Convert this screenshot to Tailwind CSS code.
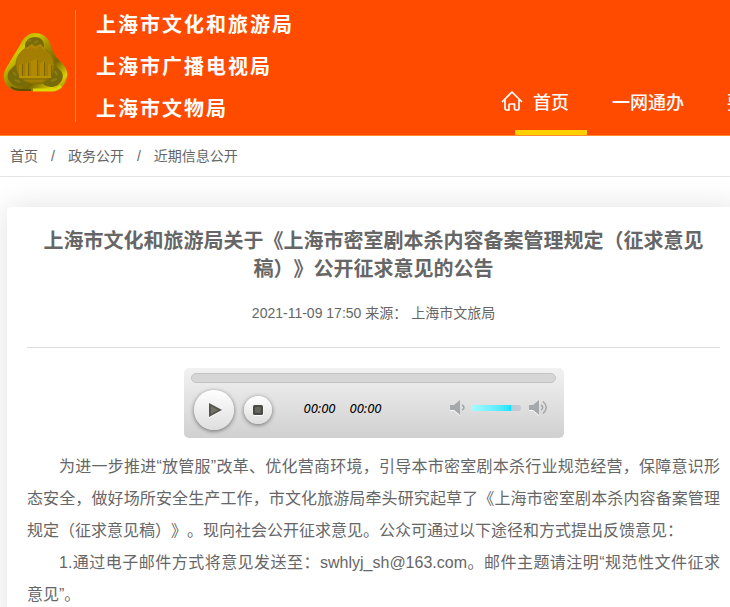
<!DOCTYPE html>
<html lang="zh-CN">
<head>
    <meta charset="UTF-8">
    <meta name="viewport" content="width=device-width, initial-scale=1.0">
    <title>上海市文化和旅游局</title>
    <script src="https://cdn.jsdelivr.net/npm/@tailwindcss/browser@4"></script>
</head>
<body class="bg-white text-[#666] overflow-x-hidden font-['Liberation_Sans','Noto_Sans_CJK_SC',sans-serif] [text-spacing-trim:space-all]">

    <!-- Header -->
    <header class="bg-[#ff4b00] border-b border-[#ff8a2b] text-white flex overflow-hidden">
        <div class="flex shrink-0 pb-[5px]">
            <!-- Emblem -->
            <svg class="w-[76px] h-[76px] mt-6 shrink-0" viewBox="0 0 76 76" aria-hidden="true">
                <defs>
                    <linearGradient id="gold" x1="0" y1="0" x2="1" y2="1">
                        <stop offset="0" stop-color="#8d7c00"/>
                        <stop offset=".28" stop-color="#d2c800"/>
                        <stop offset=".45" stop-color="#a39000"/>
                        <stop offset=".66" stop-color="#776500"/>
                        <stop offset=".85" stop-color="#dcd000"/>
                        <stop offset="1" stop-color="#806b00"/>
                    </linearGradient>
                    <linearGradient id="disc" x1="0" y1="0" x2="0" y2="1">
                        <stop offset="0" stop-color="#a57e04"/>
                        <stop offset="1" stop-color="#a08003"/>
                    </linearGradient>
                </defs>
                <path d="M35 9c6 0 11 3 14 8l4 10c2 5 5 8 9 12 5 6 7 11 4 17-2 7-7 11-14 11H19C11 67 5 62 4 55c-1-5 1-9 4-14l12-20c3-6 7-12 15-12z" fill="url(#gold)"/>
                <path d="M35 13c6 0 9 4 9 9v7H25v-7c0-5 4-9 10-9zM9 47l9-9 10 22c-7 4-14 3-18-2-3-3-3-7-1-11zM52 38l9 9c3 4 2 9-1 12-4 5-12 5-17 1z" fill="#776b0a"/>
                <path d="M28 17l3-1M34 19l4-2M13 48l3 3M15 56l5 2M55 47l2 4M51 57l6-2" stroke="#8d7e10" stroke-width="2"/>
                <path d="M11 63q4 3 9 3h11" fill="none" stroke="#5f5000" stroke-width="2"/>
                <path d="M33 66h19q5 0 9-4" fill="none" stroke="#dcd800" stroke-width="3"/>
                <circle cx="35" cy="41" r="19" fill="url(#disc)" stroke="#8b7206" stroke-width="1"/>
                <path d="M26 25l6-4 3 3 5-3 5 5" fill="none" stroke="#b18605" stroke-width="2"/>
                <path d="M19 41l3-2v13h-3zM25 40l3-2v14h-3zM31 37l6-2v17h-6zM40 39l4-2v15h-4zM48 41l3-2v13h-3z" fill="#b18a02"/>
                <path d="M22.500 40v12M28.500 39v13M37.500 36v16M44.500 38v14M51.500 41v10" stroke="#7d6300" stroke-width="1"/>
                <path d="M19 53h32" stroke="#b79400" stroke-width="2"/>
                <path d="M20 55h30M26 59h19" stroke="#846a00" stroke-width="1"/>
            </svg>
            <div class="-ml-px mt-2.5 w-px h-28 bg-[#ff8a3d]"></div>
            <h1 class="pl-5 pt-1 text-xl leading-[42px] font-bold tracking-widest">
                上海市文化和旅游局<br>上海市广播电视局<br>上海市文物局
            </h1>
        </div>
        <nav class="flex items-end gap-[7px] shrink-0 ml-[207px] text-lg font-medium whitespace-nowrap">
            <a href="#" class="relative flex items-center gap-2.5 h-[65px] pr-[18px]">
                <svg class="w-[22px] h-[22px] -mt-1" viewBox="0 0 22 22" fill="none" stroke="currentColor" stroke-width="1.7" stroke-linecap="round" stroke-linejoin="round" aria-hidden="true">
                    <path d="M1.500 11.500 11 2l9.500 9.500"/>
                    <path d="M4 10v8.500q0 1.500 1.500 1.500H8v-5q0-1 1-1h4.500v4.500q0 1.500 1.500 1.500h1.500q1.500 0 1.500-1.500V10"/>
                </svg>
                首页
                <span class="absolute left-[14px] right-0 bottom-0 h-[5px] bg-[#ffd000]"></span>
            </a>
            <a href="#" class="flex items-center h-[65px] px-[18px]">一网通办</a>
            <a href="#" class="flex items-center h-[65px] px-[18px]">要闻动态</a>
        </nav>
    </header>

    <!-- Breadcrumb -->
    <nav class="flex items-center h-[41px] pl-2.5 border-b border-[#e5e5e5] text-sm">
        <a href="#">首页</a>
        <span class="mx-[13px]">/</span>
        <a href="#">政务公开</a>
        <span class="mx-[13px]">/</span>
        <a href="#">近期信息公开</a>
    </nav>

    <!-- Article -->
    <main class="mt-[30px] ml-[7px] -mr-2.5 p-5 rounded-sm bg-white shadow-[0_0_30px_rgba(0,0,0,0.12)]">
        <h2 class="text-xl leading-7 font-bold text-center">上海市文化和旅游局关于《上海市密室剧本杀内容备案管理规定（征求意见稿）》公开征求意见的公告</h2>
        <p class="mt-5 pb-6 border-b border-[#ddd] text-sm leading-5 text-center">2021-11-09 17:50 来源： 上海市文旅局</p>

        <!-- Audio player -->
        <div class="w-[380px] h-[70px] mt-5 mx-auto pl-[7px] pr-2 pt-[5px] rounded-[5px] bg-linear-to-b from-[#f2f2f2] to-[#d0d0d0] text-black">
            <input type="range" value="0" aria-label="播放进度" class="block w-full h-2.5 appearance-none rounded-full bg-[#d6d6d6] border border-[#c4c4c4] [&::-webkit-slider-thumb]:appearance-none [&::-webkit-slider-thumb]:w-0">
            <div class="flex items-center mt-[7px] pl-[3px]">
                <button type="button" aria-label="播放" class="flex items-center justify-center w-10 h-10 rounded-full bg-linear-to-b from-white to-[#dedede] shadow-[0_1px_4px_rgba(0,0,0,0.5)]">
                    <svg class="w-5 h-5" viewBox="0 0 20 20" aria-hidden="true">
                        <path d="M5 5v13l13-7z" fill="#fff"/>
                        <path d="M5 3v14l13-7z" fill="#55554c"/>
                        <path d="M7 6v8l7-4z" fill="#737368"/>
                    </svg>
                </button>
                <button type="button" aria-label="停止" class="flex items-center justify-center w-7 h-7 ml-2.5 rounded-full bg-linear-to-b from-white to-[#dedede] shadow-[0_1px_4px_rgba(0,0,0,0.5)]">
                    <svg class="w-3 h-3" viewBox="0 0 12 12" aria-hidden="true">
                        <rect x="1.500" y="2" width="10" height="10" rx="1.500" fill="#fff"/>
                        <rect x="1" y="1" width="10" height="10" rx="1.500" fill="#4a4a45"/>
                        <rect x="3" y="3" width="6" height="6" rx="1" fill="#66665f"/>
                    </svg>
                </button>
                <div class="flex gap-3.5 ml-8 pb-1 text-[13px] leading-5 italic font-normal font-['Noto_Sans',sans-serif]">
                    <span>00:00</span>
                    <span>00:00</span>
                </div>
                <div class="flex items-center ml-auto pb-1 pr-[5px]">
                    <svg class="w-[18px] h-4" viewBox="0 0 18 16" fill="none" aria-hidden="true">
                        <path d="M1 6h4l6-5v15l-6-5H1z" fill="#fff"/>
                        <path d="M1 5h4l6-5v15l-6-5H1z" fill="#a5a9ac"/>
                        <path d="M13 5q4 2.500 0 5" stroke="#a5a9ac" stroke-width="1.600"/>
                    </svg>
                    <input type="range" value="80" aria-label="音量" class="block w-[50px] h-1.5 mx-1 appearance-none rounded-full bg-[#c6c8cd] bg-linear-to-r from-[#a5fbff] via-[#00e4ff] via-80% to-[#c6c8cd] to-84% [&::-webkit-slider-thumb]:appearance-none [&::-webkit-slider-thumb]:w-0">
                    <svg class="w-[22px] h-4 ml-1" viewBox="0 0 22 16" fill="none" aria-hidden="true">
                        <path d="M0 6h4l6-5v15l-6-5H0z" fill="#fff"/>
                        <path d="M0 5h4l6-5v15l-6-5H0z" fill="#a5a9ac"/>
                        <path d="M12 5q3.500 2.500 0 5M14 1.500q6.500 6 0 12" stroke="#a5a9ac" stroke-width="1.600"/>
                    </svg>
                </div>
            </div>
        </div>

        <div class="mt-[13px] text-base leading-8 text-justify indent-8">
            <p>为进一步推进“放管服”改革、优化营商环境，引导本市密室剧本杀行业规范经营，保障意识形态安全，做好场所安全生产工作，市文化旅游局牵头研究起草了《上海市密室剧本杀内容备案管理规定（征求意见稿）》。现向社会公开征求意见。公众可通过以下途径和方式提出反馈意见：</p>
            <p>1.通过电子邮件方式将意见发送至：swhlyj_sh@163.com。邮件主题请注明“规范性文件征求意见”。</p>
        </div>
    </main>

</body>
</html>
